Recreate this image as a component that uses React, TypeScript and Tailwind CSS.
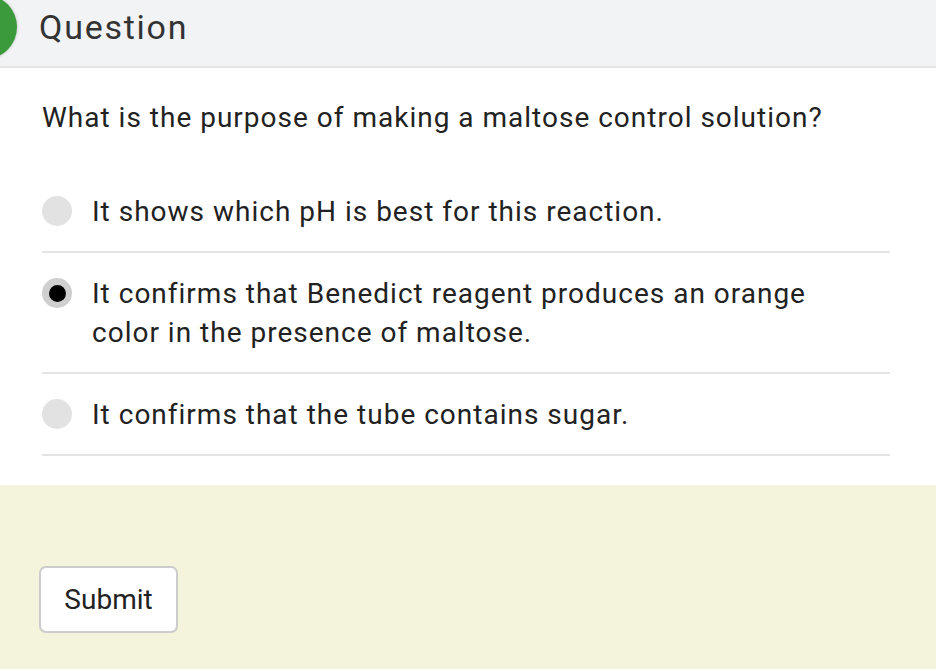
import { useState } from "react";

const options = [
  "It shows which pH is best for this reaction.",
  "It confirms that Benedict reagent produces an orange color in the presence of maltose.",
  "It confirms that the tube contains sugar.",
];

export default function App() {
  const [selected, setSelected] = useState(1);

  return (
    <div
      className="w-[936px] h-[670px] bg-white text-[#222] overflow-hidden"
      style={{ fontFamily: "Roboto, 'Liberation Sans', sans-serif" }}
    >
      <div className="relative h-[68px] bg-[#f2f3f5] border-b-2 border-[#e4e4e4] flex items-center pl-[39px] pb-[12px] overflow-hidden">
        <div className="absolute left-[-47px] top-[-5px] w-[64px] h-[64px] rounded-full bg-[#3a9a3c] shadow-[0_0_3px_rgba(0,0,0,0.25)]" />
        <h1 className="text-[34px] tracking-[1.75px] text-[#333]">Question</h1>
      </div>

      <div className="px-[42px] pt-[33px] pb-[29px] w-[932px]">
        <p className="text-[28px] leading-[34px] tracking-[1px]">
          What is the purpose of making a maltose control solution?
        </p>

        <div className="mt-[36px]">
          {options.map((o, i) => (
            <button
              key={i}
              onClick={() => setSelected(i)}
              className="w-full flex items-start gap-[20px] text-left border-b-2 border-[#e4e4e4] pt-[21px] pb-[20px] pr-[40px] cursor-pointer"
            >
              <span
                className={
                  "mt-[4px] shrink-0 w-[30px] h-[30px] rounded-full flex items-center justify-center " +
                  (selected === i ? "bg-[#cfcfcf]" : "bg-[#e2e2e2]")
                }
              >
                {selected === i && (
                  <span className="w-[17px] h-[17px] rounded-full bg-black" />
                )}
              </span>
              <span className="flex-1 text-[28px] leading-[39px] tracking-[1px]">
                {o}
              </span>
            </button>
          ))}
        </div>
      </div>

      <div className="bg-[#f4f3dc] h-[184px] pt-[81px] pl-[39px]">
        <button className="w-[139px] h-[67px] bg-white border-2 border-[#cccccc] rounded-[7px] text-[28px] text-[#222] cursor-pointer">
          Submit
        </button>
      </div>
    </div>
  );
}
